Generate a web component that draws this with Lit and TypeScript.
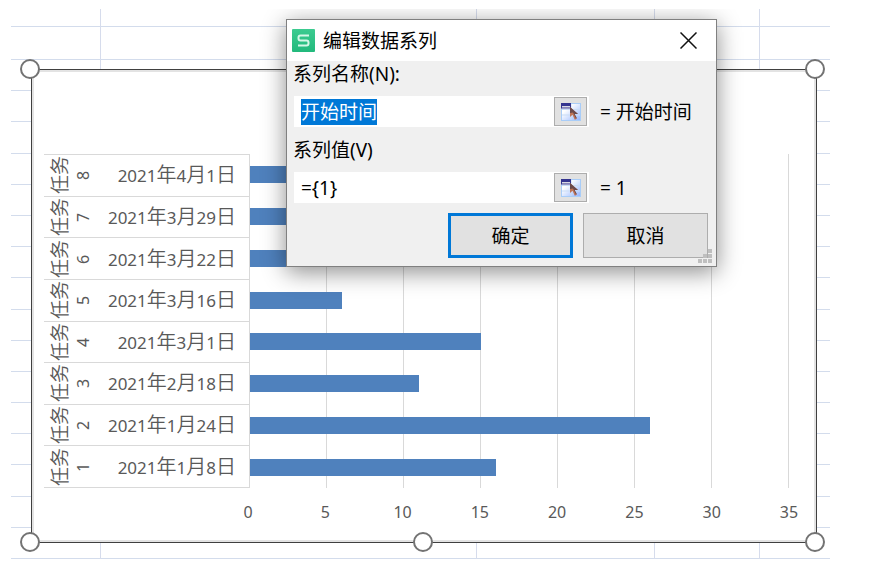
import { LitElement, html, svg, css } from "lit";
import { customElement, property, query } from "lit/decorators.js";

interface Task {
  id: number;
  date: string;
  days: number;
}

const TASKS: Task[] = [
  { id: 8, date: "2021年4月1日", days: 3 },
  { id: 7, date: "2021年3月29日", days: 6 },
  { id: 6, date: "2021年3月22日", days: 7 },
  { id: 5, date: "2021年3月16日", days: 6 },
  { id: 4, date: "2021年3月1日", days: 15 },
  { id: 3, date: "2021年2月18日", days: 11 },
  { id: 2, date: "2021年1月24日", days: 26 },
  { id: 1, date: "2021年1月8日", days: 16 },
];

const TICKS = [0, 5, 10, 15, 20, 25, 30, 35];
const AXIS_MAX = 35;

@customElement("gantt-chart")
export class GanttChart extends LitElement {
  static styles = css`
    :host {
      display: block;
      position: relative;
      box-sizing: border-box;
      border: 1px solid #404040;
      box-shadow: inset 0 0 0 2px #e3e3e3;
      background: #fff;
      padding: 84px 27px 18px 12px;
      color: #595959;
      font: 16px/24px "Noto Sans", "Noto Sans CJK SC", sans-serif;
    }
    .body {
      display: grid;
      grid-template-columns: 206px 1fr;
      height: 334px;
    }
    .categories {
      display: grid;
      grid-template-rows: repeat(8, 1fr);
      border-top: 1px solid #d9d9d9;
      border-right: 1px solid #d9d9d9;
    }
    .category {
      display: flex;
      align-items: center;
      justify-content: space-between;
      border-bottom: 1px solid #d9d9d9;
      padding: 0 13px 0 2px;
      min-height: 0;
    }
    .task {
      writing-mode: vertical-rl;
      text-orientation: sideways;
      transform: rotate(180deg);
      display: flex;
      flex-direction: column-reverse;
      align-items: center;
      line-height: 25px;
      white-space: nowrap;
    }
    .date {
      font-size: 17px;
    }
    .han {
      font-family: "Noto Sans CJK SC", sans-serif;
      font-size: 20px;
      font-weight: 350;
    }
    .task .han {
      font-size: 19px;
    }
    .plot {
      display: grid;
    }
    .lines,
    .bars {
      grid-area: 1 / 1;
      display: grid;
    }
    .lines {
      grid-template-columns: repeat(7, 1fr);
    }
    .line {
      border-right: 1px solid #d9d9d9;
    }
    .bars {
      grid-template-rows: repeat(8, 1fr);
      align-items: center;
    }
    .bar {
      height: 17px;
      background: #4f81bd;
    }
    .ticks {
      display: flex;
      justify-content: space-between;
      margin: 12px -20px 0 184px;
    }
    .tick {
      width: 40px;
      text-align: center;
    }
    .handle {
      position: absolute;
      box-sizing: border-box;
      width: 20px;
      height: 20px;
      border: 2px solid #737373;
      border-radius: 50%;
      background: #fff;
    }
    .top {
      top: -11px;
    }
    .bottom {
      bottom: -10px;
    }
    .left {
      left: -12px;
    }
    .right {
      right: -9px;
    }
    .middle {
      left: calc(50% - 11px);
    }
  `;

  @property({ attribute: false }) tasks: Task[] = [];

  private renderDate(date: string) {
    return date
      .split(/([年月日])/)
      .filter(Boolean)
      .map((part) => (/\d/.test(part) ? part : html`<span class="han">${part}</span>`));
  }

  render() {
    return html`
      <div class="body">
        <div class="categories">
          ${this.tasks.map(
            (t) => html`<div class="category">
              <div class="task"><span>${t.id}</span><span class="han">任务</span></div>
              <div class="date">${this.renderDate(t.date)}</div>
            </div>`
          )}
        </div>
        <div class="plot">
          <div class="lines">${TICKS.slice(1).map(() => html`<div class="line"></div>`)}</div>
          <div class="bars">
            ${this.tasks.map(
              (t) => html`<div class="bar" style="width:${(t.days / AXIS_MAX) * 100}%"></div>`
            )}
          </div>
        </div>
      </div>
      <div class="ticks">${TICKS.map((t) => html`<span class="tick">${t}</span>`)}</div>
      <span class="handle top left"></span>
      <span class="handle top right"></span>
      <span class="handle bottom left"></span>
      <span class="handle bottom middle"></span>
      <span class="handle bottom right"></span>
    `;
  }
}

@customElement("series-dialog")
export class SeriesDialog extends LitElement {
  static styles = css`
    :host {
      display: block;
      box-sizing: border-box;
      border: 1px solid #808080;
      background: #f0f0f0;
      box-shadow: 0 5px 22px rgba(0, 0, 0, 0.45);
      color: #000;
      font: 19px/26px "Noto Sans", "Noto Sans CJK SC", sans-serif;
    }
    .title {
      display: flex;
      align-items: center;
      height: 41px;
      padding: 0 19px 0 5px;
      background: #fff;
    }
    .name {
      flex: 1;
      margin: 0 0 0 8px;
      font: inherit;
    }
    .close {
      display: flex;
      padding: 0;
      border: 0;
      background: none;
    }
    .form {
      display: grid;
      row-gap: 10px;
      padding: 0 8px 8px 6px;
    }
    .group {
      display: grid;
      row-gap: 9px;
    }
    .row {
      display: flex;
      align-items: center;
      gap: 11px;
    }
    .field {
      display: flex;
      box-sizing: border-box;
      width: 295px;
      height: 31px;
      padding: 1px 2px 1px 0;
      background: #fff;
      margin-left: 1px;
    }
    .input {
      flex: 1;
      min-width: 0;
      border: 0;
      outline: 0;
      padding: 0 7px;
      background: none;
      color: inherit;
      font: inherit;
      caret-color: transparent;
    }
    .input::selection {
      background: #0078d7;
      color: #fff;
    }
    .pick {
      display: flex;
      align-items: center;
      justify-content: center;
      box-sizing: border-box;
      width: 33px;
      padding: 0;
      border: 1px solid #adadad;
      background: #e1e1e1;
    }
    .actions {
      display: flex;
      justify-content: flex-end;
      gap: 10px;
    }
    .button {
      box-sizing: border-box;
      width: 125px;
      height: 45px;
      padding: 0;
      border: 1px solid #adadad;
      background: #e1e1e1;
      color: inherit;
      font: inherit;
    }
    .primary {
      border: 3px solid #0078d7;
    }
    .grip {
      position: absolute;
      right: 4px;
      bottom: 2px;
    }
  `;

  @query("#series-name") private nameInput!: HTMLInputElement;

  firstUpdated() {
    this.nameInput.focus();
    this.nameInput.select();
  }

  private pickIcon() {
    return svg`<svg width="20" height="18" viewBox="0 0 20 18" aria-hidden="true">
      <defs>
        <linearGradient id="sheet" x1="0" y1="0" x2="1" y2="1">
          <stop offset="0.3" stop-color="#fff" />
          <stop offset="1" stop-color="#8fb2ff" />
        </linearGradient>
      </defs>
      <rect x="0.5" y="0.5" width="19" height="17" fill="url(#sheet)" stroke="#a9cdf8" />
      <path d="M1 6.5h18M1 12h18M10 1v16" stroke="#c9dcf5" fill="none" />
      <rect x="0" y="0" width="10" height="5.5" fill="#34348f" />
      <rect x="1" y="3" width="8" height="1.5" fill="#d8d8e4" />
      <path d="M9 4v10l2.500-2.300 2.300 5 2-1-2.200-4.700h3.400z" fill="#bd7256" />
      <path d="M9 4v6l3-0.500 3 6 0.800-0.400-2.200-4.100h3.400z" fill="#6b4a4c" />
    </svg>`;
  }

  render() {
    return html`
      <div class="title">
        <svg width="23" height="23" viewBox="0 0 23 23" aria-hidden="true">
          <defs>
            <linearGradient id="logo" x1="0" y1="0" x2="0" y2="1">
              <stop offset="0" stop-color="#3ccb90" />
              <stop offset="1" stop-color="#22b97c" />
            </linearGradient>
          </defs>
          <rect width="23" height="23" rx="1" fill="url(#logo)" />
          <path
            d="M17 6.500H8.500Q6.500 6.500 6.500 8.500V9.500Q6.500 11.500 8.500 11.500H14.500Q16.500 11.500 16.500 13.500V14.500Q16.500 16.500 14.500 16.500H6"
            fill="none"
            stroke="#d5f7e7"
            stroke-width="2"
          />
        </svg>
        <h1 class="name">编辑数据系列</h1>
        <button class="close" aria-label="关闭">
          <svg width="17" height="17" viewBox="0 0 17 17">
            <path d="M0.500 0.500l16 16M16.500 0.500l-16 16" stroke="#111" stroke-width="1.500" />
          </svg>
        </button>
      </div>
      <div class="form">
        <div class="group">
          <label for="series-name">系列名称(N):</label>
          <div class="row">
            <div class="field">
              <input class="input" id="series-name" value="开始时间" />
              <button class="pick" aria-label="选择名称区域">${this.pickIcon()}</button>
            </div>
            <output for="series-name">= 开始时间</output>
          </div>
        </div>
        <div class="group">
          <label for="series-value">系列值(V)</label>
          <div class="row">
            <div class="field">
              <input class="input" id="series-value" value="={1}" />
              <button class="pick" aria-label="选择数值区域">${this.pickIcon()}</button>
            </div>
            <output for="series-value">= 1</output>
          </div>
        </div>
        <div class="actions">
          <button class="button primary">确定</button>
          <button class="button">取消</button>
        </div>
      </div>
      <svg class="grip" width="14" height="15" viewBox="0 0 14 15" aria-hidden="true">
        <path d="M10 0h4v4h-4zM5 5h4v4h-4zM10 5h4v4h-4zM0 10h4v4h-4zM5 10h4v4h-4zM10 10h4v4h-4z" fill="#bfbfbf" />
      </svg>
    `;
  }
}

@customElement("app-root")
export class AppRoot extends LitElement {
  static styles = css`
    :host {
      display: block;
      background: #fff;
      padding: 9px 49px 6px 11px;
    }
    .sheet {
      display: grid;
      position: relative;
      overflow: hidden;
    }
    .rows,
    .columns,
    .chart {
      grid-area: 1 / 1;
      min-width: 0;
    }
    .rows {
      display: grid;
      grid-template-rows: 18px 33px repeat(16, 1fr);
    }
    .row {
      border-bottom: 1px solid #d3dcec;
    }
    .columns {
      display: grid;
      grid-template-columns: 90px 376px 178px 105px 1fr;
    }
    .column {
      border-right: 1px solid #d6dcec;
    }
    .column:last-child {
      border-right: 0;
    }
    .chart {
      margin: 60px 13px 16px 20px;
    }
    .dialog {
      position: absolute;
      top: 10px;
      left: 275px;
      width: 431px;
    }
  `;

  render() {
    return html`
      <main class="sheet">
        <div class="rows">${Array.from({ length: 18 }, () => html`<div class="row"></div>`)}</div>
        <div class="columns">${Array.from({ length: 5 }, () => html`<div class="column"></div>`)}</div>
        <gantt-chart class="chart" .tasks=${TASKS}></gantt-chart>
        <series-dialog class="dialog" role="dialog" aria-label="编辑数据系列"></series-dialog>
      </main>
    `;
  }
}
